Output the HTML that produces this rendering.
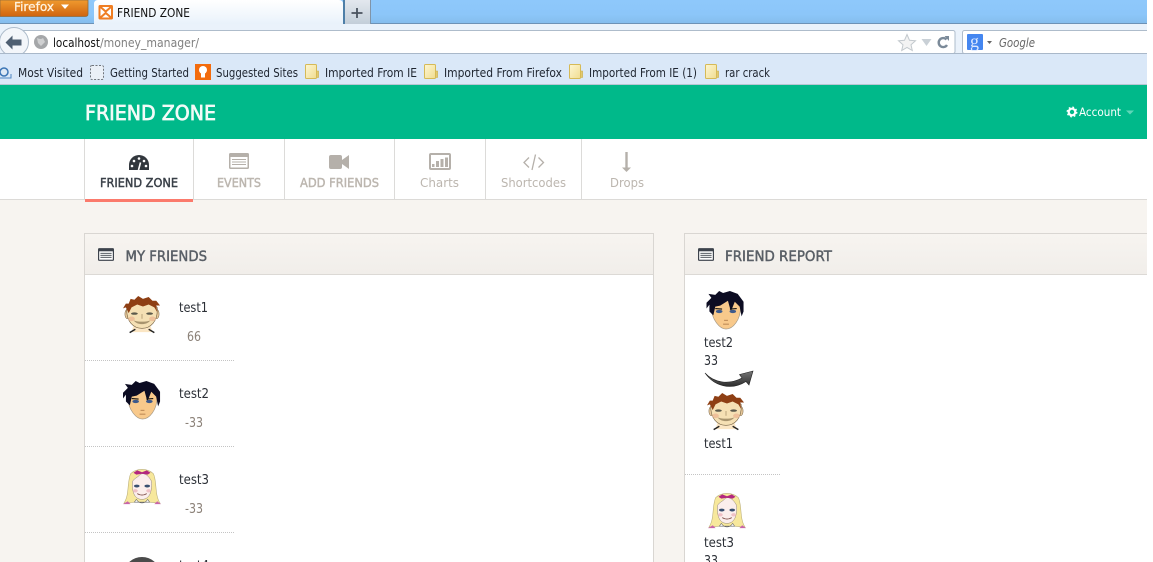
<!DOCTYPE html>
<html><head><meta charset="utf-8"><title>FRIEND ZONE</title>
<style>
html,body{margin:0;padding:0;background:#fff;width:1153px;height:562px;overflow:hidden}
svg{display:block}
text{font-family:"DejaVu Sans",sans-serif}
.b{font-size:12px;fill:#1e2530}
.tab{font-size:12px;fill:#bcb6af;stroke:#bcb6af;stroke-width:.45px}
.tab2{font-size:12.500px;fill:#bcb6af}
.n{font-size:13px;fill:#2b2f36}
.v{font-size:13px;fill:#8b8178}
.h{font-size:14px;fill:#595f66;stroke:#595f66;stroke-width:.45px}
</style></head><body>
<svg width="1153" height="562" viewBox="0 0 1153 562" xmlns="http://www.w3.org/2000/svg">
<defs>
<linearGradient id="sky" x1="0" y1="0" x2="0" y2="1"><stop offset="0" stop-color="#8ec8fb"/><stop offset=".6" stop-color="#8cc6f9"/><stop offset="1" stop-color="#84bcec"/></linearGradient>
<linearGradient id="org" x1="0" y1="0" x2="0" y2="1"><stop offset="0" stop-color="#f09a2e"/><stop offset="1" stop-color="#cf6410"/></linearGradient>
<linearGradient id="tabg" x1="0" y1="0" x2="0" y2="1"><stop offset="0" stop-color="#fff"/><stop offset="1" stop-color="#e9f2fb"/></linearGradient>
<linearGradient id="newt" x1="0" y1="0" x2="0" y2="1"><stop offset="0" stop-color="#e3e8ee"/><stop offset="1" stop-color="#c3ced9"/></linearGradient>
<linearGradient id="head" x1="0" y1="0" x2="0" y2="1"><stop offset="0" stop-color="#f7f4f0"/><stop offset="1" stop-color="#f1eeea"/></linearGradient>
<linearGradient id="fold" x1="0" y1="0" x2="1" y2="1"><stop offset="0" stop-color="#fdf6d2"/><stop offset="1" stop-color="#f0dc90"/></linearGradient>
<linearGradient id="arr" x1="0" y1="0" x2="0" y2="1"><stop offset="0" stop-color="#777"/><stop offset="1" stop-color="#2c2c2c"/></linearGradient>

<symbol id="boy" viewBox="0 0 40 40" overflow="visible">
<path d="M11 31L9 38H31L29 31Z" fill="#fbe6c4"/>
<path d="M7 38.500L13 35M33 38.500L27 35" stroke="#222" stroke-width="1.500"/>
<ellipse cx="4.500" cy="19" rx="2.500" ry="5" fill="#e6c79a" stroke="#6d5a3c" stroke-width=".5"/>
<ellipse cx="35.500" cy="19" rx="2.500" ry="5" fill="#e6c79a" stroke="#6d5a3c" stroke-width=".5"/>
<path d="M4 12C3 27 11 34 20 34C29 34 37 27 36 12C30 5 10 5 4 12Z" fill="#f5e0b4" stroke="#6d5a3c" stroke-width=".6"/>
<path d="M0 13L3 8L6 8L8 3L12 4L16 0L21 3L27 1L31 5L35 5L39 10L35 10L36 17L33 12L27 9L21 11L15 9L9 12L6 18L3 12Z" fill="#8e3f14"/>
<ellipse cx="12" cy="18.500" rx="3.500" ry="1.300" fill="#5c5a4c"/><ellipse cx="28" cy="18.500" rx="3.500" ry="1.300" fill="#5c5a4c"/>
<ellipse cx="9" cy="24" rx="3.500" ry="2.400" fill="#eec09a"/><ellipse cx="31" cy="24" rx="3.500" ry="2.400" fill="#eec09a"/>
<path d="M11 25.500C15 31 25 31 29 25.500C25 27.500 15 27.500 11 25.500Z" fill="#a8946e"/>
<path d="M20 19V24" stroke="#b8a078" stroke-width="1"/>
</symbol>

<symbol id="dark" viewBox="0 0 40 40" overflow="visible">
<path d="M5 16C5 30 14 39 20 39C27 39 35 30 35 16C30 6 10 6 5 16Z" fill="#f8c98b" stroke="#a79b88" stroke-width=".7"/>
<path d="M0 12L5 7L2 3L9 4L13 0L17 2L24 0L32 3L38 11L38 21L36 26L34 16L29 11L25 21L22 10L14 15L9 16L7 25L3 21L3 14L0 18Z" fill="#0c0c22"/>
<ellipse cx="13" cy="21" rx="3.400" ry="1.700" fill="#3d5a8c"/><ellipse cx="27" cy="21" rx="3.400" ry="1.700" fill="#3d5a8c"/>
<path d="M9 18L16 18.500M24 18.500L31 18" stroke="#111" stroke-width="1.200"/>
<path d="M18 30H22M17 34H23" stroke="#a36f3f" stroke-width=".8"/>
</symbol>

<symbol id="girl" viewBox="0 0 40 40" overflow="visible">
<path d="M8 6C4 16 7 28 1 37L12 36H28L39 37C33 28 36 14 32 6C26 0 14 0 8 6Z" fill="#f7e89c" stroke="#b9ad78" stroke-width=".6"/>
<path d="M10 14C9 30 15 33 20 33C26 33 31 28 30 14C26 6 20 4 17 8C15 10 12 11 10 14Z" fill="#fbeeec" stroke="#8b7f78" stroke-width=".5"/>
<path d="M11 5L15 2.500L20 4.500L25 2.500L29 5L26 7L20 6L14 7Z" fill="#b3277f"/>
<ellipse cx="14.500" cy="19" rx="3" ry="1.500" fill="#384f70"/><ellipse cx="25.500" cy="19" rx="3" ry="1.500" fill="#384f70"/>
<ellipse cx="13" cy="24" rx="2.500" ry="1.800" fill="#efc1c6"/><ellipse cx="27" cy="24" rx="2.500" ry="1.800" fill="#efc1c6"/>
<path d="M15 27C18 29 22 29 25 27" stroke="#7c4a45" stroke-width="1" fill="none"/>
<path d="M12 36L14 33C17 38 23 38 26 33L28 36Z" fill="#fff" stroke="#666" stroke-width=".6"/>
<path d="M0 38L5 35L8 38ZM33 38L36 35L40 38Z" fill="#c765a9"/>
</symbol>

<symbol id="grid" viewBox="0 0 20 16" overflow="visible">
<rect x="0" y="0" width="20" height="16" rx="1.500" fill="currentColor"/>
<rect x="1.500" y="4" width="17" height="10.500" fill="#fff"/>
<path d="M3 6.500H17M3 9H17M3 11.500H17" stroke="currentColor" stroke-width="1"/>
</symbol>

<symbol id="folder" viewBox="0 0 14 15" overflow="visible">
<path d="M11 7H13.500V13.500H11Z" fill="#e2c96f" stroke="#c9a83c" stroke-width=".6"/>
<rect x=".5" y=".5" width="11" height="14" rx="1" fill="url(#fold)" stroke="#d6ba56"/>
</symbol>
</defs>

<rect width="1153" height="562" fill="#fff"/>

<!-- browser tab strip -->
<rect x="0" y="0" width="1147" height="24" fill="url(#sky)"/>
<rect x="0" y="24" width="1147" height="30" fill="#eaf2fb"/>
<rect x="0" y="23" width="1147" height="1" fill="#6d92b6"/>
<path d="M0 0H88V14Q88 16.500 85 16.500H0Z" fill="url(#org)" stroke="#8f6a3c" stroke-width=".8"/>
<text x="14" y="11" font-size="12" fill="#fff2dd" stroke="#fff2dd" stroke-width=".3" textLength="40" lengthAdjust="spacingAndGlyphs">Firefox</text>
<path d="M61 4.500H69L65 9Z" fill="#fff"/>
<path d="M94 24V4Q94 0 98 0H339Q343 0 343 4V24Z" fill="url(#tabg)"/>
<path d="M344.500 24V0H370.500V24Z" fill="url(#newt)"/>
<rect x="343" y="0" width="2" height="24" fill="#4e7fa8"/>
<rect x="370" y="0" width="1" height="24" fill="#8094a8"/>
<path d="M357 8V18M351.500 13H362.500" stroke="#49525e" stroke-width="1.800"/>
<rect x="98.500" y="5" width="14.500" height="14.500" rx="1.500" fill="#ef7d22"/>
<rect x="100.500" y="7" width="10.500" height="10.500" fill="#fff"/>
<path d="M100.500 7L105.700 11.500L111 7M100.500 17.500L105.700 13L111 17.500" stroke="#ef7d22" stroke-width="2" fill="none"/>
<text x="117" y="17" class="b" style="fill:#111" textLength="73" lengthAdjust="spacingAndGlyphs">FRIEND ZONE</text>

<!-- nav bar -->
<rect x="14" y="30.500" width="941" height="23" rx="2" fill="#fff" stroke="#aebccb"/>
<circle cx="14" cy="42" r="14.500" fill="#f3f6fa" stroke="#aebccb"/>
<path d="M5.500 42.500L12.500 35.500V39.500H21.500V45.500H12.500V49.500Z" fill="#4f5f72"/>
<circle cx="41" cy="42" r="7" fill="#a5a7a9"/>
<path d="M37 38Q41 40 43 38L45 42L41 46L38 43Z" fill="#cfd0d1"/>
<text x="53" y="47" class="b" style="fill:#111" textLength="47" lengthAdjust="spacingAndGlyphs">localhost</text>
<text x="100" y="47" class="b" style="fill:#808080" textLength="99" lengthAdjust="spacingAndGlyphs">/money_manager/</text>
<path d="M907 34.500L909.500 40.300L915.500 40.800L911 44.800L912.300 50.500L907 47.500L901.700 50.500L903 44.800L898.500 40.800L904.500 40.300Z" fill="#f3f3f3" stroke="#c2c8cd"/>
<path d="M921.500 39H931.500L926.500 46Z" fill="#c9d0d6"/>
<path d="M946.500 39.500A4.500 4.500 0 1 0 947 45" fill="none" stroke="#7b8a99" stroke-width="2.400"/>
<path d="M944.500 36L949 36V41Z" fill="#7b8a99"/>
<rect x="962.500" y="30.500" width="190" height="23" rx="2" fill="#fff" stroke="#aebccb"/>
<rect x="967" y="34" width="16" height="16" rx="1" fill="#4486f0"/>
<text x="970" y="47" font-size="18" fill="#dce8ff" style="font-family:'Liberation Serif',serif">g</text>
<path d="M987 41H992L989.500 44Z" fill="#666"/>
<text x="999" y="47" font-size="12" font-style="italic" fill="#666" textLength="36" lengthAdjust="spacingAndGlyphs">Google</text>

<!-- bookmarks -->
<rect x="0" y="54" width="1147" height="31" fill="#dae8f8"/>
<rect x="0" y="53" width="1147" height="1" fill="#a9b8c9"/>
<rect x="0" y="84" width="1147" height="1" fill="#b8c6d3"/>
<circle cx="4" cy="72" r="4" fill="#dce8f5" stroke="#3b75b5" stroke-width="1.500"/>
<path d="M0 78H11V74" fill="none" stroke="#4e86c2" stroke-width="1"/>
<text x="18" y="77" class="b" textLength="65" lengthAdjust="spacingAndGlyphs">Most Visited</text>
<rect x="90.500" y="65.500" width="13" height="14" rx="1.500" fill="#eaf0f7" stroke="#70757b" stroke-dasharray="2 1.500"/>
<text x="110" y="77" class="b" textLength="79" lengthAdjust="spacingAndGlyphs">Getting Started</text>
<rect x="195" y="64" width="16" height="16" fill="#f36b0c"/>
<circle cx="203" cy="70" r="4" fill="#fff"/><rect x="201" y="73" width="4" height="4.500" fill="#fff"/>
<text x="216" y="77" class="b" textLength="82" lengthAdjust="spacingAndGlyphs">Suggested Sites</text>
<use href="#folder" x="305" y="64" width="14" height="15"/>
<text x="325" y="77" class="b" textLength="92" lengthAdjust="spacingAndGlyphs">Imported From IE</text>
<use href="#folder" x="424" y="64" width="14" height="15"/>
<text x="444" y="77" class="b" textLength="118" lengthAdjust="spacingAndGlyphs">Imported From Firefox</text>
<use href="#folder" x="569" y="64" width="14" height="15"/>
<text x="589" y="77" class="b" textLength="108" lengthAdjust="spacingAndGlyphs">Imported From IE (1)</text>
<use href="#folder" x="705" y="64" width="14" height="15"/>
<text x="725" y="77" class="b" textLength="45" lengthAdjust="spacingAndGlyphs">rar crack</text>

<!-- green bar -->
<rect x="0" y="85" width="1147" height="54" fill="#00b98a"/>
<text x="85" y="120" font-size="20" fill="#f3fbf8" stroke="#f3fbf8" stroke-width=".7" textLength="131" lengthAdjust="spacingAndGlyphs">FRIEND ZONE</text>
<circle cx="1072" cy="112" r="3.300" fill="none" stroke="#fff" stroke-width="2.200"/>
<circle cx="1072" cy="112" r="4.800" fill="none" stroke="#fff" stroke-width="1.300" stroke-dasharray="1.800 2"/>
<text x="1079" y="116" font-size="11.500" fill="#fff" textLength="42" lengthAdjust="spacingAndGlyphs">Account</text>
<path d="M1126 110.500H1134L1130 114.500Z" fill="#5fd6b8"/>

<!-- page -->
<rect x="0" y="200" width="1147" height="362" fill="#f7f4f0"/>
<rect x="0" y="199" width="1147" height="1" fill="#dcdad7"/>
<g fill="#dcdbd9">
<rect x="84" y="139" width="1" height="60"/><rect x="193" y="139" width="1" height="60"/>
<rect x="284" y="139" width="1" height="60"/><rect x="394" y="139" width="1" height="60"/>
<rect x="485" y="139" width="1" height="60"/><rect x="581" y="139" width="1" height="60"/>
</g>
<rect x="85" y="199" width="108" height="3" fill="#fb7a6c"/>

<!-- tab icons -->
<path d="M129 170V165A10 10 0 0 1 149 165V170Z" fill="#32373d"/>
<circle cx="134" cy="161" r="1.300" fill="#fff"/><circle cx="139" cy="158.500" r="1.300" fill="#fff"/><circle cx="144" cy="161" r="1.300" fill="#fff"/><circle cx="132" cy="166" r="1.300" fill="#fff"/><circle cx="146" cy="166" r="1.300" fill="#fff"/>
<path d="M138.500 170L140.500 162.500" stroke="#fff" stroke-width="1.600"/>
<text x="100" y="187" class="tab" style="fill:#3a4048;stroke:#3a4048" textLength="78" lengthAdjust="spacingAndGlyphs">FRIEND ZONE</text>

<use href="#grid" x="229" y="153" width="20" height="16" style="color:#b5b0aa"/>
<text x="217" y="187" class="tab" textLength="44" lengthAdjust="spacingAndGlyphs">EVENTS</text>

<rect x="329" y="155" width="13" height="14" rx="2" fill="#b5b0aa"/>
<path d="M342 160L349 155V169L342 164Z" fill="#b5b0aa"/>
<text x="300" y="187" class="tab" textLength="79" lengthAdjust="spacingAndGlyphs">ADD FRIENDS</text>

<rect x="430" y="154" width="20" height="15" rx="1" fill="#fff" stroke="#b5b0aa" stroke-width="2"/>
<path d="M432 167V164h2.500V167ZM436 167V161h3V167ZM440.500 167V159h3V167ZM445 167V157.500h3V167Z" fill="#b5b0aa"/>
<text x="420" y="187" class="tab2" textLength="39" lengthAdjust="spacingAndGlyphs">Charts</text>

<path d="M529 157.500L524 162.500L529 167.500M538.500 157.500L543.500 162.500L538.500 167.500M535.500 154.500L532 170" fill="none" stroke="#b5b0aa" stroke-width="1.300"/>
<text x="501" y="187" class="tab2" textLength="65" lengthAdjust="spacingAndGlyphs">Shortcodes</text>

<path d="M626.500 152V168" stroke="#b5b0aa" stroke-width="2.400"/>
<path d="M622 167.500H631L626.500 172Z" fill="#b5b0aa"/>
<text x="610" y="187" class="tab2" textLength="34" lengthAdjust="spacingAndGlyphs">Drops</text>

<!-- left panel -->
<rect x="85" y="274" width="568" height="288" fill="#fff"/>
<rect x="85" y="234" width="568" height="40" fill="url(#head)"/>
<path d="M84.500 562V233.500H653.500V562" fill="none" stroke="#d9d6d2"/>
<rect x="85" y="274" width="568" height="1" fill="#dcd9d5"/>
<use href="#grid" x="98" y="248" width="16" height="13" style="color:#3d434c"/>
<text x="125.500" y="261" class="h" textLength="81.500" lengthAdjust="spacingAndGlyphs">MY FRIENDS</text>

<use href="#boy" x="122" y="296" width="40" height="38"/>
<text x="179" y="312" class="n" textLength="29" lengthAdjust="spacingAndGlyphs">test1</text>
<text x="187" y="341" class="v" textLength="14" lengthAdjust="spacingAndGlyphs">66</text>
<path d="M85 360.500H235" stroke="#c4c4c4" stroke-dasharray="1 1"/>

<use href="#dark" x="123" y="381" width="39" height="39"/>
<text x="179" y="398" class="n" textLength="30" lengthAdjust="spacingAndGlyphs">test2</text>
<text x="185" y="427" class="v" textLength="18" lengthAdjust="spacingAndGlyphs">-33</text>
<path d="M85 446.500H235" stroke="#c4c4c4" stroke-dasharray="1 1"/>

<use href="#girl" x="123" y="468" width="38" height="38"/>
<text x="179" y="484" class="n" textLength="30" lengthAdjust="spacingAndGlyphs">test3</text>
<text x="185" y="513" class="v" textLength="18" lengthAdjust="spacingAndGlyphs">-33</text>
<path d="M85 532.500H235" stroke="#c4c4c4" stroke-dasharray="1 1"/>

<ellipse cx="142" cy="572" rx="17" ry="15" fill="#4b4b4b"/>
<text x="179" y="570" class="n" textLength="30" lengthAdjust="spacingAndGlyphs">test4</text>

<!-- right panel -->
<rect x="685" y="274" width="462" height="288" fill="#fff"/>
<rect x="685" y="234" width="462" height="40" fill="url(#head)"/>
<path d="M1147 233.500H684.500V562" fill="none" stroke="#d9d6d2"/>
<rect x="685" y="274" width="462" height="1" fill="#dcd9d5"/>
<use href="#grid" x="698" y="248" width="16" height="13" style="color:#3d434c"/>
<text x="725" y="261" class="h" textLength="107" lengthAdjust="spacingAndGlyphs">FRIEND REPORT</text>

<use href="#dark" x="706" y="291" width="40" height="39"/>
<text x="704" y="347" class="n" textLength="29" lengthAdjust="spacingAndGlyphs">test2</text>
<text x="704" y="365" class="n" textLength="14" lengthAdjust="spacingAndGlyphs">33</text>
<path d="M705 373C714 383 729 385 742 378L739.500 374.500L753 371L749 385L746 381.500C731 391 714 386 705 373Z" fill="url(#arr)" stroke="#222" stroke-width=".6"/>
<use href="#boy" x="706" y="393" width="40" height="38"/>
<text x="704" y="448" class="n" textLength="29" lengthAdjust="spacingAndGlyphs">test1</text>
<path d="M685 474.500H780" stroke="#c4c4c4" stroke-dasharray="1 1"/>
<use href="#girl" x="708" y="492" width="38" height="38"/>
<text x="704" y="547" class="n" textLength="30" lengthAdjust="spacingAndGlyphs">test3</text>
<text x="704" y="565" class="n" textLength="14" lengthAdjust="spacingAndGlyphs">33</text>

<!-- right strip beyond captured content -->
<rect x="1147" y="0" width="6" height="562" fill="#fff"/>
</svg>
</body></html>
